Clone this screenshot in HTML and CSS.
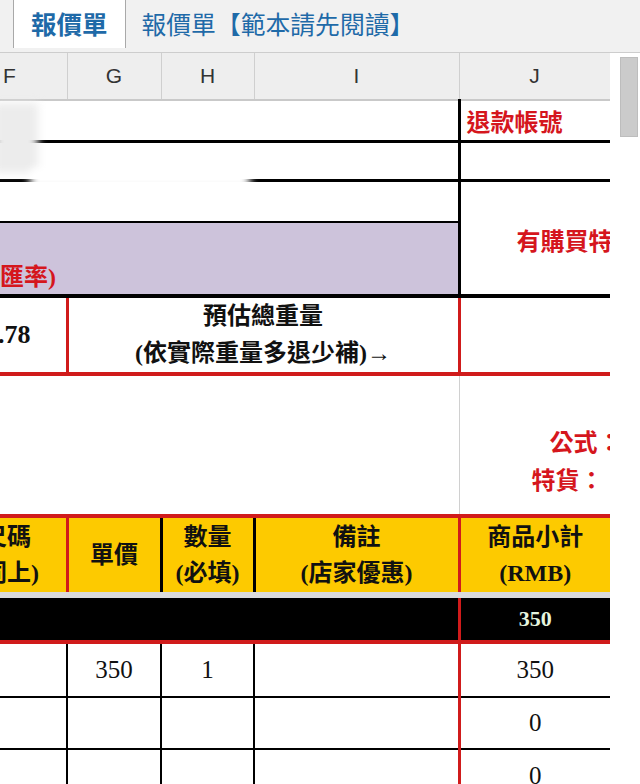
FILE: index.html
```html
<!DOCTYPE html>
<html lang="zh-Hant">
<head>
  <meta charset="UTF-8">
  <meta name="viewport" content="width=device-width, initial-scale=1.0">
  <title>報價單</title>
  <link rel="stylesheet" href="styles.css">
</head>
<body>
  <div class="tabs">
    <div class="tab active">報價單</div>
    <div class="tab">報價單【範本請先閱讀】</div>
  </div>

  <div class="sheet">
    <div class="grid">
      <table>
        <colgroup>
          <col class="col-f">
          <col class="col-g">
          <col class="col-h">
          <col class="col-i">
          <col class="col-j">
        </colgroup>
        <tr class="letters">
          <th class="first">F</th><th>G</th><th>H</th><th>I</th><th>J</th>
        </tr>
        <tr class="r-refund">
          <td colspan="4"></td>
          <td class="j-black red label">退款帳號</td>
        </tr>
        <tr class="r-account">
          <td colspan="4"></td>
          <td class="j-black"></td>
        </tr>
        <tr class="r-blank">
          <td colspan="4"></td>
          <td class="j-black red special" rowspan="2"><div class="clip">有購買特</div></td>
        </tr>
        <tr class="r-rate">
          <td colspan="4" class="rate red">匯率)</td>
        </tr>
        <tr class="r-weight">
          <td><div class="clip end">1.78</div></td>
          <td colspan="3" class="v-red weight">預估總重量<br>(依實際重量多退少補)→</td>
          <td class="v-red"></td>
        </tr>
        <tr class="r-note">
          <td colspan="4"></td>
          <td class="j-gray red formula">
            <div class="clip"><span class="line one">公式：</span><span class="line two">特貨：</span></div>
          </td>
        </tr>
        <tr class="r-head">
          <td><div class="clip"><div class="shift">尺碼<br>(同上)</div></div></td>
          <td class="v-red">單價</td>
          <td class="v-black">數量<br>(必填)</td>
          <td class="v-black">備註<br>(店家優惠)</td>
          <td class="v-red">商品小計<br>(RMB)</td>
        </tr>
        <tr class="r-total">
          <td colspan="4"></td>
          <td class="sum">350</td>
        </tr>
        <tr class="r-item">
          <td></td><td>350</td><td>1</td><td></td><td class="v-red">350</td>
        </tr>
        <tr class="r-item">
          <td></td><td></td><td></td><td></td><td class="v-red">0</td>
        </tr>
        <tr class="r-item last">
          <td></td><td></td><td></td><td></td><td class="v-red">0</td>
        </tr>
      </table>

      <!-- blanked-out personal data -->
      <div class="smear left"></div>
      <div class="smear wide"></div>
    </div>

    <div class="scroll">
      <div class="thumb"></div>
    </div>
  </div>
</body>
</html>
```

FILE: styles.css
```css
* {
  box-sizing: border-box;
  margin: 0;
  padding: 0;
}
body {
  background: white;
  width: 640px;
  height: 784px;
  overflow: hidden;
  font-family: "Liberation Serif", "Noto Sans CJK TC", serif;
}

/* sheet tabs */
.tabs {
  height: 53px;
  background: #f1f1f1;
  border-bottom: 1px solid #cdcdcd;
  display: flex;
  align-items: flex-start;
  padding-left: 13px;
  font-family: "Noto Sans CJK TC", sans-serif;
}
.tab {
  height: 48px;
  line-height: 46px;
  padding: 0 16px;
  color: #1f6aa8;
  font-size: 24.8px;
}
.tab.active {
  background: white;
  border-left: 1px solid #a9a9a9;
  border-right: 1px solid #a9a9a9;
  font-weight: bold;
  font-size: 25.5px;
  padding: 0 17px;
}

.sheet {
  display: flex;
}
.grid {
  position: relative;
  width: 610px;
  overflow: hidden;
}
.scroll {
  width: 30px;
  padding: 4px 2px 0 10px;
}
.thumb {
  height: 80px;
  background: #cbcbcb;
  border: 1px solid #bdbdbd;
}

/* grid */
table {
  width: 610px;
  table-layout: fixed;
  border-collapse: collapse;
}
.col-f { width: 67px; }
.col-g { width: 94px; }
.col-h { width: 93px; }
.col-i { width: 205px; }
.col-j { width: 151px; }

td, th {
  padding: 0;
  text-align: center;
  vertical-align: middle;
  font-size: 24px;
  font-weight: bold;
  color: #111;
  overflow: hidden;
  white-space: nowrap;
}
.red { color: #d5161d; }
.clip {
  overflow: hidden;
  white-space: nowrap;
  text-align: left;
}
.clip.end {
  display: flex;
  justify-content: flex-end;
  padding-right: 35px;
  font-size: 26px;
}

.letters th {
  height: 47px;
  background: #eeeeee;
  font-family: "Liberation Sans", Arial, sans-serif;
  font-weight: normal;
  font-size: 21px;
  color: #333;
  border-right: 1px solid #cfcfcf;
  border-bottom: 2px solid #c9c9c9;
}
.letters th.first {
  text-align: left;
  padding-left: 3px;
}

.j-black { border-left: 3px solid #000; }
.j-gray { border-left: 1px solid #d0d0d0; }
.v-red { border-left: 3px solid #d01b1b; }
.v-black { border-left: 3px solid #000; }

.r-refund td { height: 41px; border-bottom: 3px solid #000; }
.r-refund .label {
  text-align: left;
  padding-left: 6px;
}
.r-account td { height: 39px; border-bottom: 3px solid #000; }
.r-blank td { height: 42px; }
.r-blank td:first-child { border-bottom: 2px solid #000; }
.r-blank .special {
  border-bottom: 4px solid #000;
  padding-top: 4px;
}
.r-blank .special .clip { padding-left: 56px; }
.r-rate td {
  height: 74px;
  background: #cdc3db;
  border-bottom: 4px solid #000;
  text-align: left;
  vertical-align: bottom;
  padding-bottom: 2px;
}

.r-weight td {
  height: 74px;
  border-bottom: 4px solid #d01b1b;
}
.r-weight .weight {
  line-height: 37px;
}

.r-note td {
  height: 142px;
  border-bottom: 4px solid #d01b1b;
}
.r-note .formula {
  vertical-align: top;
}
.formula .clip { padding-top: 48px; }
.formula .line {
  display: block;
  line-height: 38px;
}
.formula .one { padding-left: 90px; }
.formula .two { padding-left: 72px; }

.r-head td {
  height: 79px;
  background: #fdca00;
  border-bottom: 6px solid #dadada;
  line-height: 36px;
}
.r-head .shift {
  width: 200px;
  margin-left: -93px;
  text-align: center;
}

.r-total td {
  height: 47px;
  background: #000;
  border-bottom: 4px solid #d01b1b;
}
.r-total .sum {
  color: #e6f5df;
  font-size: 22px;
  border-left: 3px solid #d01b1b;
}

.r-item td {
  height: 55px;
  border-bottom: 2px solid #000;
  border-left: 2px solid #000;
  font-weight: normal;
  font-size: 25px;
}
.r-item td:first-child { border-left: none; }
.r-item td.v-red { border-left: 3px solid #d01b1b; }
.r-item + .r-item td { height: 52px; }
.r-item.last td { border-bottom: none; }

/* blanked-out personal data */
.smear {
  position: absolute;
  filter: blur(4px);
}
.smear.left {
  left: -6px;
  top: 50px;
  width: 44px;
  height: 70px;
  background: #ececec;
}
.smear.wide {
  left: 30px;
  top: 115px;
  width: 220px;
  height: 22px;
  background: white;
}
```
